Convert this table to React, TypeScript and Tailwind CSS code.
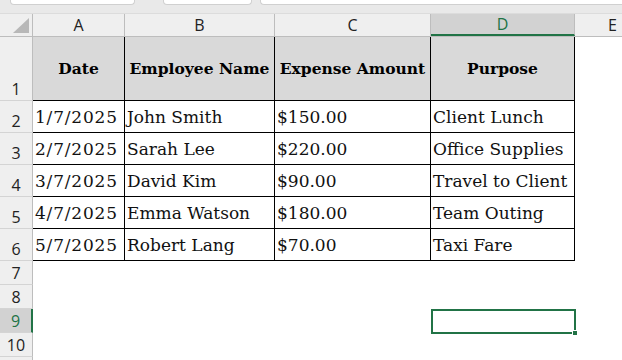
import React from "react"

const serif = { fontFamily: '"DejaVu Serif", "Liberation Serif", serif' }

const cols = [
  { key: "A", w: "w-[92px]" },
  { key: "B", w: "w-[150px]" },
  { key: "C", w: "w-[156px]" },
  { key: "D", w: "w-[144px]" },
]

const header = ["Date", "Employee Name", "Expense Amount", "Purpose"]

const rows = [
  ["1/7/2025", "John Smith", "$150.00", "Client Lunch"],
  ["2/7/2025", "Sarah Lee", "$220.00", "Office Supplies"],
  ["3/7/2025", "David Kim", "$90.00", "Travel to Client"],
  ["4/7/2025", "Emma Watson", "$180.00", "Team Outing"],
  ["5/7/2025", "Robert Lang", "$70.00", "Taxi Fare"],
]

function RowHead({ n, h, active }: { n: number; h: string; active?: boolean }) {
  return (
    <div
      className={`w-[33px] shrink-0 ${h} flex items-end justify-center pb-[1px] text-[16px] leading-[20px] border-b border-[#d4d4d4] ${
        active
          ? "bg-[#d2d2d2] text-[#217346] border-r-2 border-r-[#217346]"
          : "bg-[#efefef] text-[#222] border-r border-r-[#bdbdbd]"
      }`}
    >
      {n}
    </div>
  )
}

export default function App() {
  return (
    <div
      className="w-[622px] h-[360px] overflow-hidden bg-white flex flex-col"
      style={{ fontFamily: '"Open Sans", "Noto Sans", sans-serif' }}
    >
      {/* ribbon remnants */}
      <div className="h-[14px] shrink-0 bg-[#e9e9e9] flex items-start gap-[8px] border-b border-[#dcdcdc]">
        <div className="ml-[10px] w-[125px] h-[5px] bg-white border border-t-0 border-[#d0d0d0] rounded-b-[4px]" />
        <div className="ml-[20px] w-[89px] h-[5px] bg-white border border-t-0 border-[#d0d0d0] rounded-b-[4px]" />
        <div className="flex-1 h-[5px] bg-white border border-t-0 border-r-0 border-[#d0d0d0] rounded-bl-[4px]" />
      </div>

      {/* column headers */}
      <div className="h-[23px] shrink-0 flex bg-[#efefef] text-[16px] text-[#222] border-b border-[#bdbdbd]">
        <div className="w-[33px] shrink-0 border-r border-[#bdbdbd] flex items-end justify-end pr-[3px] pb-[3px]">
          <svg width="16" height="15" viewBox="0 0 16 15">
            <polygon points="16,0 16,15 0,15" fill="#b8b8b8" />
          </svg>
        </div>
        {cols.map((c) =>
          c.key === "D" ? (
            <div
              key={c.key}
              className={`${c.w} shrink-0 flex items-center justify-center bg-[#d2d2d2] text-[#217346] border-r border-[#bdbdbd] border-b-2 border-b-[#217346]`}
            >
              {c.key}
            </div>
          ) : (
            <div key={c.key} className={`${c.w} shrink-0 flex items-center justify-center border-r border-[#bdbdbd]`}>
              {c.key}
            </div>
          )
        )}
        <div className="flex-1 flex items-center pl-[33px] overflow-hidden">E</div>
      </div>

      {/* row 1: table header */}
      <div className="flex h-[64px] shrink-0">
        <RowHead n={1} h="h-[64px]" />
        {cols.map((c, i) => (
          <div
            key={c.key}
            className={`${c.w} shrink-0 bg-[#d9d9d9] border-r border-b border-black flex items-center justify-center font-bold text-[15.5px] text-black whitespace-nowrap`}
            style={serif}
          >
            {header[i]}
          </div>
        ))}
      </div>

      {/* data rows */}
      {rows.map((r, ri) => (
        <div key={ri} className="flex h-[32px] shrink-0">
          <RowHead n={ri + 2} h="h-[32px]" />
          {cols.map((c, i) => (
            <div
              key={c.key}
              className={`${c.w} shrink-0 border-r border-b border-black flex items-end pl-[2px] pb-[2px] text-[17px] text-[#111] whitespace-nowrap overflow-hidden ${
                i === 0 ? "tracking-[0.8px]" : ""
              }`}
              style={serif}
            >
              {r[i]}
            </div>
          ))}
        </div>
      ))}

      {/* empty rows */}
      {[7, 8, 9, 10].map((n) => (
        <div key={n} className="flex h-[24px] shrink-0">
          <RowHead n={n} h="h-[24px]" active={n === 9} />
          <div className="w-[398px] shrink-0" />
          {n === 9 && (
            <div className="relative w-[145px] h-[25px] shrink-0 border-2 border-[#217346]">
              <div className="absolute -right-[4px] -bottom-[4px] w-[6px] h-[6px] bg-[#217346] border border-white" />
            </div>
          )}
        </div>
      ))}
      <div className="flex flex-1">
        <div className="w-[33px] shrink-0 bg-[#efefef] border-r border-[#bdbdbd]" />
      </div>
    </div>
  )
}
